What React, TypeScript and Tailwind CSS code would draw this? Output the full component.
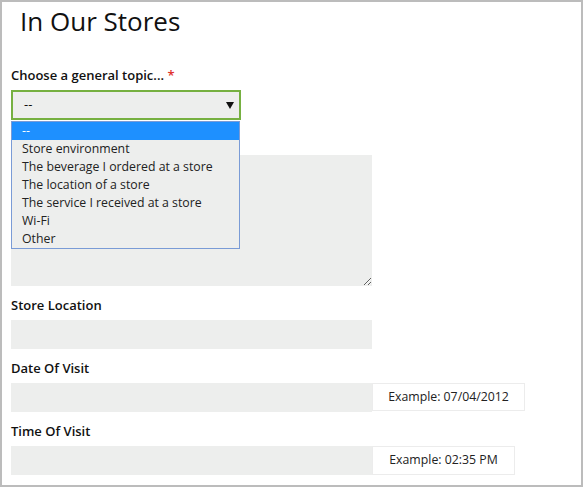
import React from "react";

const font = { fontFamily: '"Open Sans", "Noto Sans", sans-serif' };

export default function App() {
  const options = [
    "--",
    "Store environment",
    "The beverage I ordered at a store",
    "The location of a store",
    "The service I received at a store",
    "Wi-Fi",
    "Other",
  ];
  return (
    <div
      className="w-[583px] h-[487px] border-2 border-[#bcbcbc] bg-white box-border text-[#111] overflow-hidden"
      style={font}
    >
      <div className="pl-[9px] pt-[2px]">
        <h1 className="text-[26px] leading-[34px] pl-[9px] font-normal text-[#111]">In Our Stores</h1>

        <div className="mt-[28px] text-[13px] leading-[18px] font-semibold text-[#111]">
          Choose a general topic... <span className="text-[#e0312b]">*</span>
        </div>

        <div className="relative mt-[6px] w-[230px]">
          <div className="h-[30px] w-[230px] border-2 border-[#76b041] bg-[#edeeed] flex items-center justify-between pl-[11px] pr-[5px]">
            <span className="text-[13px] text-[#111]">--</span>
            <svg width="8" height="7" viewBox="0 0 8 7">
              <polygon points="0,0 8,0 4,7" fill="#111" />
            </svg>
          </div>
          <div className="absolute left-0 top-[31px] w-[229px] border border-[#7a9bd6] bg-[#edeeed] z-10">
            {options.map((o, i) => (
              <div
                key={o}
                className={
                  "h-[18px] leading-[17px] pl-[10px] text-[12.3px] " +
                  (i === 0 ? "bg-[#1e90ff] text-white" : "text-[#222]")
                }
              >
                {o}
              </div>
            ))}
          </div>
        </div>

        <textarea className="block mt-[35px] w-[361px] h-[131px] bg-[#edeeed] outline-none" />

        <div className="mt-[10px] mb-[6px] text-[13px] leading-[18px] font-semibold">Store Location</div>
        <input className="block w-[361px] h-[29px] bg-[#edeeed] outline-none" />

        <div className="mt-[10px] mb-[6px] text-[13px] leading-[18px] font-semibold">Date Of Visit</div>
        <div className="flex items-start">
          <input className="block w-[361px] h-[29px] bg-[#edeeed] outline-none" />
          <div className="h-[28px] w-[153px] border border-[#ececec] flex items-center justify-center text-[12.3px] text-[#222]">
            Example: 07/04/2012
          </div>
        </div>

        <div className="mt-[10px] mb-[6px] text-[13px] leading-[18px] font-semibold">Time Of Visit</div>
        <div className="flex items-start">
          <input className="block w-[361px] h-[29px] bg-[#edeeed] outline-none" />
          <div className="h-[29px] w-[143px] border border-[#ececec] flex items-center justify-center text-[12.3px] text-[#222]">
            Example: 02:35 PM
          </div>
        </div>
      </div>
    </div>
  );
}
